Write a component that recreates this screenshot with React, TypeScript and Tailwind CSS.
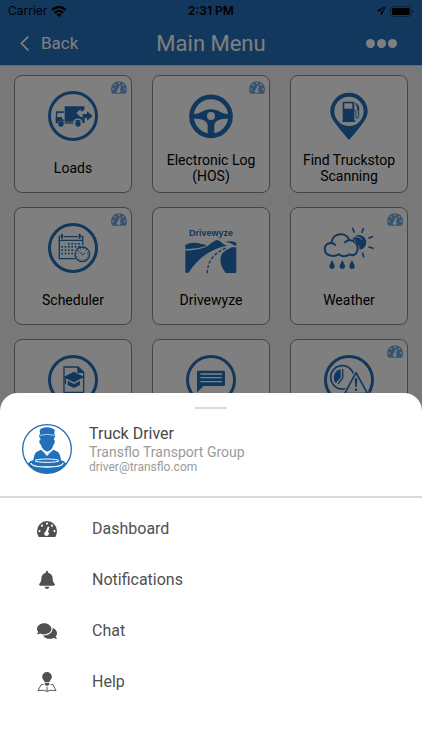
import type { ReactNode } from "react"
import { FaBell, FaComments } from "react-icons/fa"

const GaugeIcon = ({ className }: { className: string }) => (
    <svg viewBox="0 0 48 38" className={className} aria-hidden="true">
        <path
            d="M4 38 Q0 32 0 24 A24 24 0 0 1 48 24 Q48 32 44 38 Z"
            fill="currentColor"
        />
        <g fill="white">
            <circle cx="6" cy="24" r="2.6" />
            <circle cx="12" cy="11" r="2.6" />
            <circle cx="24" cy="6" r="2.6" />
            <circle cx="36" cy="11" r="2.6" />
            <circle cx="42" cy="24" r="2.6" />
            <path d="M26 13 L30 14 L26.500 26 A5.500 5.500 0 0 1 26 35 H20 A5.500 5.500 0 0 1 21 25 Z" />
        </g>
    </svg>
)

const TileSvg = ({ children, ring }: { children: ReactNode; ring?: boolean }) => (
    <svg
        viewBox="0 0 150 150"
        className="h-[50px] w-[50px] shrink-0 overflow-visible text-[#2270b9]"
        fill="currentColor"
        aria-hidden="true"
    >
        {ring && (
            <circle cx="75" cy="75" r="70.500" fill="none" stroke="currentColor" strokeWidth="9" />
        )}
        {children}
    </svg>
)

const LoadsIcon = () => (
    <TileSvg ring>
        <path d="M50 46 H109 V56 L103 61 H98 V54 L85 66 L98 78 H104 V92 H50 Z" />
        <path d="M104 69 H117 V61 L134 75 L117 89 V81 H110 V96 H102 V88 H104 Z" />
        <path d="M24 61 H47 V66 H28 L27 78 H42 V85 H47 V94 H52 V97 H48 A10 10 0 0 0 29 97 H23 V82 Z" />
        <path d="M52 94 H77 V98 H52 Z" />
        <circle cx="39" cy="99" r="8" />
        <circle cx="90" cy="99" r="8" />
        <path d="M77 94 A13 13 0 0 1 102 94" fill="none" stroke="white" strokeWidth="4" />
    </TileSvg>
)

const WheelIcon = () => (
    <TileSvg>
        <circle cx="75" cy="76" r="58.500" fill="none" stroke="currentColor" strokeWidth="14" />
        <path d="M18 70 C44 70 52 55 75 55 C98 55 106 70 132 70 V83 H118 C98 84 86 90 85 104 V130 H65 V104 C64 90 52 84 32 83 H18 Z" />
        <circle cx="75" cy="75" r="12" fill="white" />
    </TileSvg>
)

const FuelPinIcon = () => (
    <TileSvg>
        <path d="M75 5 A56 56 0 0 1 131 61 C131 84 112 104 75 147 C38 104 19 84 19 61 A56 56 0 0 1 75 5 Z" />
        <circle cx="75" cy="61" r="44" fill="white" />
        <path d="M59 32 H87 Q91 32 91 36 V88 H94 V93 H55 V88 H56 V36 Q56 32 59 32 Z" />
        <path d="M61 37 H85 V53 H61 Z" fill="white" />
        <path
            d="M91 57 Q96 57 96 64 V78 Q97 84 101 82 Q104 80 104 74 V50 Q104 44 94 35"
            fill="none"
            stroke="currentColor"
            strokeWidth="3"
        />
        <path d="M96 38 L105 48 V58 H99 V47 L95 43 Z" />
    </TileSvg>
)

const SchedulerIcon = () => (
    <TileSvg ring>
        <g fill="none" stroke="currentColor" strokeWidth="4">
            <path d="M38 40 H34 V52 H104 V40 H99 M47 41 H89" />
            <path d="M34 52 V107 H82 M104 52 V66" />
        </g>
        <rect x="39" y="32" width="6" height="15" rx="2" />
        <rect x="92" y="32" width="6" height="15" rx="2" />
        {[63, 72, 82, 92].map((y, row) =>
            [43, 53, 63, 73, 83, 93].map(
                (x, col) =>
                    !(row === 0 && col < 2) &&
                    !(row > 1 && col > 3) && (
                        <rect key={`${x}-${y}`} x={x - 3} y={y - 3} width="5" height="5" />
                    )
            )
        )}
        <circle cx="103" cy="94" r="22" fill="white" stroke="currentColor" strokeWidth="4" />
        <circle
            cx="103"
            cy="94"
            r="17"
            fill="none"
            stroke="currentColor"
            strokeWidth="4"
            strokeDasharray="2 6.900"
        />
        <path d="M94 86 L103 95 L111 91" fill="none" stroke="currentColor" strokeWidth="3" />
    </TileSvg>
)

const RoadIcon = () => (
    <TileSvg>
        <text
            x="75"
            y="38"
            textAnchor="middle"
            fontSize="27"
            fontWeight="700"
            fontFamily="Liberation Sans, sans-serif"
        >
            Drivewyze
        </text>
        <path d="M-2 65 Q20 54 46 63 Q58 64 62 68 Q30 80 -2 78 Z" />
        <path d="M-2 82 Q34 84 64 70 Q78 58 91 51 Q100 51 109 61 Q116 67 123 68 Q54 80 9 147 Q8 150 4 150 H2 Q-2 150 -2 146 Z" />
        <path d="M119 57 Q126 54 133 55 Q142 55 151 59 V69 Q141 66 138 63 Q132 59 119 57 Z" />
        <path d="M151 73 V146 Q151 150 147 150 H119 Q94 118 109 91 Q119 80 138 73 Z" />
        <path
            d="M64 151 Q64 97 124 73"
            fill="none"
            stroke="currentColor"
            strokeWidth="4"
            strokeDasharray="10 5"
        />
    </TileSvg>
)

const WeatherIcon = () => (
    <TileSvg>
        <path d="M86 47 A22 22 0 1 1 107 80 Q107 68 98 63 Q97 52 86 47 Z" />
        <path
            d="M91 43 Q106 38 113 50"
            fill="none"
            stroke="white"
            strokeWidth="3"
        />
        <g fill="none" stroke="currentColor" strokeLinecap="round">
            <path
                d="M86 16 L90 27 M118 17 L114 28 M135 45 L145 41 M135 72 L147 76 M116 91 L119 101"
                strokeWidth="5"
            />
            <path
                d="M23 56 C27 30 66 24 76 52 C91 51 99 62 101 74 C102 91 91 101 77 94 C65 102 53 101 44 94 C29 103 5 99 3 82 C0 67 11 58 26 61 Q31 62 34 66 M76 52 Q69 52 63 58"
                strokeWidth="6"
            />
        </g>
        {[24, 55, 84].map((x) => (
            <path
                key={x}
                transform={`translate(${x} 111)`}
                d="M0 0 C3 8 8 13 8 19 A8 8 0 0 1 -8 19 C-8 13 -3 8 0 0 Z"
            />
        ))}
    </TileSvg>
)

const TrainingIcon = () => (
    <TileSvg ring>
        <path
            d="M48 36 H90 L107 52 V112 H48 Z M90 36 V52 H107"
            fill="none"
            stroke="currentColor"
            strokeWidth="4"
        />
        <path d="M90 36 L107 52 H90 Z" />
        <path d="M46 66 L78 50 L109 66 L78 82 Z" />
        <path d="M59 77 L78 87 L96 77 V90 L78 99 L59 90 Z" />
        <path d="M51 68 H54 V88 H50 Z" />
    </TileSvg>
)

const MessagesIcon = () => (
    <TileSvg ring>
        <path d="M36 47 H113 Q117 47 117 51 V89 Q117 93 113 93 H53 L33 112 V51 Q33 47 36 47 Z" />
        <path d="M43 57 H108 M43 68 H108 M43 80 H108" stroke="white" strokeWidth="4" />
    </TileSvg>
)

const ViolationsIcon = () => (
    <TileSvg ring>
        <circle cx="55" cy="67" r="35" fill="none" stroke="currentColor" strokeWidth="5" />
        <path d="M50 43 V68 L35 85 Q25 70 33 54 Q39 45 50 43 Z" />
        <path d="M56 42 V69 L42 87" fill="none" stroke="currentColor" strokeWidth="4" />
        <path
            d="M96 52 L64 112 H128 Z"
            fill="white"
            stroke="white"
            strokeWidth="12"
            strokeLinejoin="round"
        />
        <path
            d="M96 53 L62 116 H131 Z"
            fill="none"
            stroke="currentColor"
            strokeWidth="5"
            strokeLinejoin="round"
        />
        <path d="M92 70 H100 L98 96 H94 Z" />
        <circle cx="96" cy="104" r="3.500" />
    </TileSvg>
)

const DriverAvatar = () => (
    <svg
        viewBox="0 0 150 150"
        className="h-[50px] w-[50px] shrink-0 text-[#2270b9]"
        fill="currentColor"
        aria-hidden="true"
    >
        <circle cx="75" cy="75" r="73" fill="none" stroke="currentColor" strokeWidth="4" />
        <path d="M53 18 Q60 10 75 10 Q90 10 98 18 L97 30 Q100 34 99 40 L96 42 V47 Q100 48 98 56 Q96 62 94 63 Q90 80 76 83 Q62 80 57 63 Q53 60 52 55 Q51 48 55 47 V42 L52 40 Q50 34 54 30 Z" />
        <path d="M54 34 Q75 28 97 34" fill="none" stroke="white" strokeWidth="2" />
        <path d="M56 77 L75 91 L95 77 Q102 81 109 85 Q115 92 117 110 H34 Q36 92 42 85 Q49 81 56 77 Z" />
        <path d="M61 80 L75 91 L90 80 L75 96 Z" fill="white" />
        <path d="M17 119 Q28 104 75 103 Q122 104 133 119 Q112 148 75 148 Q38 148 17 119 Z" />
        <ellipse cx="75" cy="110" rx="36" ry="5" fill="none" stroke="white" strokeWidth="3" />
        <path
            d="M27 117 Q28 129 75 129 Q122 129 123 117"
            fill="none"
            stroke="white"
            strokeWidth="4"
        />
    </svg>
)

const HelpIcon = () => (
    <svg viewBox="0 0 60 62" className="h-5 w-5" fill="currentColor" aria-hidden="true">
        <path d="M30 0 A15 15 0 0 1 45 15 C45 23 38 26 37 32 H23 C22 26 15 23 15 15 A15 15 0 0 1 30 0 Z" />
        <path d="M23 34 H37 V39 L33 43 H27 L23 39 Z" />
        <path
            d="M19 39 H12 L2 58 Q20 54 30 60 Q40 54 58 58 L48 39 H41 M30 46 V60"
            fill="none"
            stroke="currentColor"
            strokeWidth="3"
        />
    </svg>
)

const tiles = [
    { name: "Loads", label: "Loads", icon: <LoadsIcon />, gauge: true },
    { name: "Electronic Log", label: "Electronic Log (HOS)", icon: <WheelIcon />, gauge: true },
    { name: "Truckstop", label: "Find Truckstop Scanning", icon: <FuelPinIcon />, gauge: false },
    { name: "Scheduler", label: "Scheduler", icon: <SchedulerIcon />, gauge: true },
    { name: "Drivewyze", label: "Drivewyze", icon: <RoadIcon />, gauge: false },
    { name: "Weather", label: "Weather", icon: <WeatherIcon />, gauge: true },
    { name: "Training", label: "", icon: <TrainingIcon />, gauge: false },
    { name: "Messages", label: "", icon: <MessagesIcon />, gauge: false },
    { name: "Violations", label: "", icon: <ViolationsIcon />, gauge: true },
]

const menu = [
    { label: "Dashboard", icon: <GaugeIcon className="h-4 w-5" /> },
    { label: "Notifications", icon: <FaBell className="h-[18px] w-[18px]" /> },
    { label: "Chat", icon: <FaComments className="h-5 w-5" /> },
    { label: "Help", icon: <HelpIcon /> },
]

const StatusBar = () => (
    <div className="grid h-[22px] grid-cols-3 items-center px-2 font-['Inter',sans-serif] text-xs text-black">
        <div className="flex items-center gap-1">
            <span>Carrier</span>
            <svg viewBox="0 0 48 34" className="h-[11px] w-4" aria-hidden="true">
                <g fill="none" stroke="currentColor" strokeWidth="7">
                    <path d="M3 12 Q24 -6 45 12" />
                    <path d="M11 21 Q24 9 37 21" />
                </g>
                <path d="M16 26 Q24 19 32 26 L24 34 Z" fill="currentColor" />
            </svg>
        </div>
        <span className="text-center font-semibold">2:31 PM</span>
        <div className="flex items-center justify-end gap-1">
            <svg viewBox="0 0 30 30" className="h-[10px] w-[10px]" aria-hidden="true">
                <path
                    d="M3 14 L27 3 L16 27 V14 Z"
                    fill="none"
                    stroke="currentColor"
                    strokeWidth="3"
                    strokeLinejoin="round"
                />
            </svg>
            <svg viewBox="0 0 72 33" className="h-[11px] w-6" aria-hidden="true">
                <rect
                    x="1.500"
                    y="1.500"
                    width="62"
                    height="30"
                    rx="8"
                    fill="none"
                    stroke="currentColor"
                    strokeOpacity="0.4"
                    strokeWidth="2.500"
                />
                <rect x="6" y="6" width="53" height="21" rx="4" fill="currentColor" />
                <path d="M67 11 Q71 13 71 16.500 Q71 20 67 22 Z" fillOpacity="0.4" />
            </svg>
        </div>
    </div>
)

const Header = () => (
    <header className="border-b border-[#c9d6e8] bg-[#2670bb] text-white">
        <StatusBar />
        <div className="grid h-[43px] grid-cols-[1fr_auto_1fr] items-center px-5">
            <button type="button" className="flex items-center gap-3 text-[17px]">
                <svg viewBox="0 0 27 45" className="h-[15px] w-[9px]" aria-hidden="true">
                    <path d="M25 2 L4 22 L25 43" fill="none" stroke="currentColor" strokeWidth="5" />
                </svg>
                Back
            </button>
            <h1 className="text-[22px] leading-7">Main Menu</h1>
            <button type="button" aria-label="More" className="flex justify-self-end gap-[2px] pr-[5px]">
                <span className="h-[9px] w-[9px] rounded-full bg-white" />
                <span className="h-[9px] w-[9px] rounded-full bg-white" />
                <span className="h-[9px] w-[9px] rounded-full bg-white" />
            </button>
        </div>
    </header>
)

export default function App() {
    return (
        <div className="h-screen overflow-hidden bg-[#f0f0f0] font-['Roboto',sans-serif]">
            <Header />
            <main className="grid grid-cols-3 gap-x-5 gap-y-[14px] px-[14px] pt-[9px]">
                {tiles.map((tile) => (
                    <button
                        key={tile.name}
                        type="button"
                        aria-label={tile.label ? undefined : tile.name}
                        className="relative flex aspect-square flex-col items-center rounded-lg border border-[#8a8a8a] bg-white pt-[15px]"
                    >
                        {tile.gauge && (
                            <GaugeIcon className="absolute top-[5px] right-1 h-[13px] w-4 text-[#76a9dc]" />
                        )}
                        {tile.icon}
                        <span className="flex flex-1 items-center px-2 pt-[2px] text-sm leading-4 text-black">
                            {tile.label}
                        </span>
                    </button>
                ))}
            </main>

            <div className="fixed inset-0 bg-black/50" />

            <section className="fixed inset-x-0 bottom-0 rounded-t-[18px] bg-white pb-[43px]">
                <div className="flex h-[31px] justify-center pt-[14px]">
                    <div className="h-[2px] w-8 bg-[#dcdcdc]" />
                </div>
                <div className="flex items-center gap-[17px] border-b-2 border-[#d9d9d9] px-[22px] pb-[22px]">
                    <DriverAvatar />
                    <div>
                        <p className="text-base leading-5 text-[#484848]">Truck Driver</p>
                        <p className="text-sm leading-4 text-[#9a9a9a]">Transflo Transport Group</p>
                        <p className="text-xs leading-[14px] text-[#9a9a9a]">driver@transflo.com</p>
                    </div>
                </div>
                <nav className="pt-[5px]">
                    {menu.map((item) => (
                        <a
                            key={item.label}
                            href="#"
                            className="flex h-[51px] items-center gap-[35px] px-[36px] text-base text-[#505050]"
                        >
                            <span className="flex w-[21px] justify-center">{item.icon}</span>
                            {item.label}
                        </a>
                    ))}
                </nav>
            </section>
        </div>
    )
}
